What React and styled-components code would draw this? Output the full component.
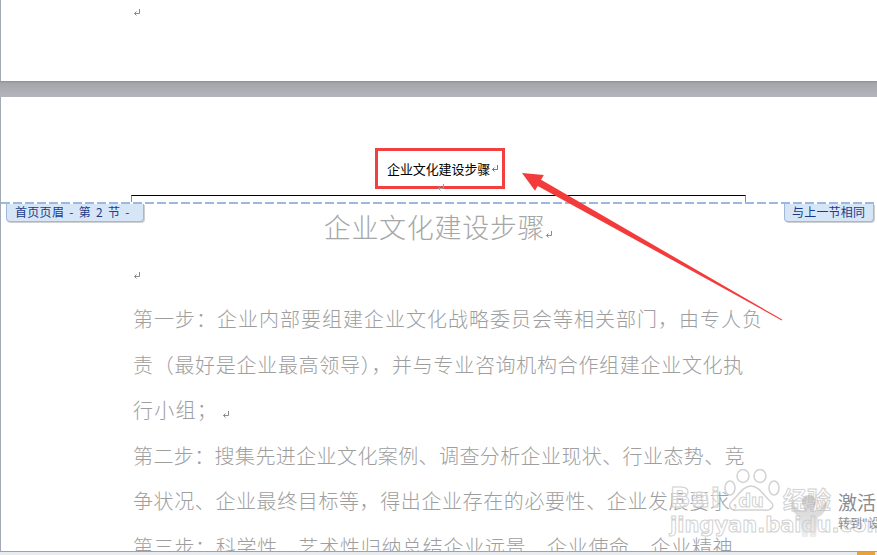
import React from "react";
import styled, { createGlobalStyle } from "styled-components";

const GlobalStyle = createGlobalStyle`
  html, body {
    margin: 0;
    padding: 0;
    background: #fff;
    overflow: hidden;
  }
  #root {
    width: 877px;
    height: 555px;
  }
`;

const Workspace = styled.div`
  position: relative;
  width: 877px;
  height: 555px;
  overflow: hidden;
  display: flex;
  flex-direction: column;
  background: #abaeb3;
  font-family: "Noto Sans CJK SC", sans-serif;
`;

const PrevPage = styled.div`
  flex: none;
  height: 81px;
  background: #fff;
  border-left: 1px solid #a3aab5;
  padding-left: 132px;
  overflow: hidden;
`;

const PageGap = styled.div`
  flex: none;
  height: 16px;
  background: linear-gradient(to bottom, #8c8f94 0, #a2a5aa 2px, #abaeb3 55%, #b2b5ba 100%);
`;

const Page = styled.div`
  position: relative;
  flex: 1;
  min-height: 0;
  background: #fff;
  border-left: 1px solid #a3aab5;
  overflow: hidden;
  display: flex;
  flex-direction: column;
`;

const HeaderArea = styled.div`
  flex: none;
  height: 105px;
  width: 615px;
  margin-left: 130px;
  display: flex;
  flex-direction: column;
  align-items: center;
  justify-content: flex-end;
`;

const HighlightBox = styled.div`
  box-sizing: border-box;
  width: 130px;
  height: 41px;
  margin-left: 3px;
  border: 3px solid #f23f3f;
  padding-left: 9px;
  display: flex;
  align-items: center;
  gap: 1px;
`;

const HeaderText = styled.span`
  font-size: 13px;
  color: #000;
  letter-spacing: -0.1px;
`;

const HeaderMark = styled.div`
  height: 6px;
  margin-left: 5px;
  display: flex;
  align-items: flex-start;
  overflow: visible;

  svg {
    margin-top: -5px;
  }
`;

const HeaderRule = styled.div`
  box-sizing: border-box;
  width: 100%;
  height: 7px;
  border-top: 1px solid #000;
  border-left: 1px solid #8f8f8f;
  border-right: 1px solid #8f8f8f;
`;

const Separator = styled.div`
  position: relative;
  flex: none;
  height: 2px;
  background: repeating-linear-gradient(to right, #9db8de 0 9px, transparent 9px 12px);
`;

const SectionTab = styled.div`
  position: absolute;
  top: 2px;
  ${(p) => (p.$side === "right" ? "right: 3px;" : "left: 5px;")}
  box-sizing: border-box;
  width: ${(p) => p.$width}px;
  height: 18px;
  padding-left: ${(p) => p.$pad}px;
  background: #d7e6f6;
  border: 1px solid #9fb9dd;
  border-top: none;
  border-radius: 0 0 4px 4px;
  box-shadow: 1px 1px 0 #cfcfcf;
  color: #1b3a8a;
  font-size: 12px;
  line-height: 16px;
  white-space: pre;
  overflow: hidden;
  letter-spacing: ${(p) => p.$track || 0}px;
  word-spacing: ${(p) => p.$gap || 0}px;
`;

const Body = styled.div`
  width: 615px;
  margin-left: 130px;
`;

const Title = styled.div`
  height: 46px;
  line-height: 46px;
  text-align: center;
  font-size: 27px;
  font-weight: 300;
  letter-spacing: 0.7px;
  color: #a6a6a6;
  white-space: nowrap;
`;

const BlankLine = styled.div`
  height: 46px;
  padding-left: 2px;
  display: flex;
  align-items: center;
  padding-top: 4px;
  box-sizing: border-box;
`;

const Line = styled.div`
  height: 45.5px;
  line-height: 45.5px;
  padding-left: 2px;
  font-size: 20px;
  font-weight: 300;
  color: #9e9e9e;
  white-space: nowrap;
  letter-spacing: ${(p) => p.$track}px;
`;

const Watermark = styled.div`
  position: absolute;
  left: 669px;
  top: 372px;
  width: 165px;
  display: flex;
  flex-direction: column;
  pointer-events: none;
`;

const MarkRow = styled.div`
  display: flex;
  align-items: flex-end;
`;

const OutlineText = styled.span`
  font-family: ${(p) => (p.$cjk ? '"Noto Sans CJK SC", sans-serif' : '"DejaVu Sans", sans-serif')};
  font-size: ${(p) => p.$size}px;
  font-weight: bold;
  line-height: 1;
  color: rgba(255, 255, 255, 0.55);
  -webkit-text-stroke: 1px #d2d2d2;
  letter-spacing: ${(p) => p.$track || 0}px;
`;

const Activation = styled.div`
  position: absolute;
  left: 837px;
  top: 393px;
  color: #8c8c8c;
  white-space: nowrap;
  display: flex;
  flex-direction: column;
`;

const ActivationTitle = styled.span`
  font-size: 19px;
  line-height: 24px;
`;

const ActivationHint = styled.span`
  font-size: 12px;
  line-height: 16px;
  margin-top: 1px;
`;

const Overlay = styled.svg`
  position: absolute;
  left: 0;
  top: 0;
  pointer-events: none;
`;

const StatusBar = styled.div`
  flex: none;
  height: 4px;
  box-sizing: border-box;
  border-top: 1px solid #9fa3a9;
  background: #e8ebef;
  display: flex;
  justify-content: flex-end;
  padding-right: 2px;
`;

const Indicator = styled.div`
  width: 18px;
  background: #e9a23b;
`;

const ReturnMark = ({ color = "#8a8a8a" }) => (
  <svg width="8" height="7" viewBox="0 0 8 7">
    <path d="M6.5 0 V4.5 H1.5" fill="none" stroke={color} strokeWidth="1" />
    <path d="M3.5 2.5 L1.5 4.5 L3.5 6.5" fill="none" stroke={color} strokeWidth="1" />
  </svg>
);

const PawMark = () => (
  <svg width="62" height="42" viewBox="0 0 62 42">
    <g fill="rgba(255,255,255,0.55)" stroke="#d2d2d2" strokeWidth="1.5">
      <ellipse cx="9" cy="19" rx="5" ry="7" />
      <ellipse cx="22" cy="7" rx="6" ry="6.5" />
      <ellipse cx="39" cy="7" rx="6" ry="6.5" />
      <ellipse cx="53" cy="19" rx="5" ry="7" />
      <path d="M30 17 C22 17 17 27 11 32 C6 37 10 42 16 41 L44 41 C50 42 55 37 49 32 C43 27 38 17 30 17 Z" />
    </g>
    <text x="30" y="38" textAnchor="middle" fontFamily="DejaVu Sans, sans-serif" fontSize="18" fontWeight="bold" fill="rgba(255,255,255,0.6)" stroke="#d2d2d2" strokeWidth="1">du</text>
  </svg>
);

const Mascot = () => (
  <svg width="46" height="52" viewBox="0 0 46 52" style={{ position: "absolute", left: 116, top: 18 }}>
    <defs>
      <linearGradient id="mascotFill" x1="0" y1="0" x2="0" y2="1">
        <stop offset="0" stopColor="#a8a8a8" />
        <stop offset="1" stopColor="#e0e0e0" />
      </linearGradient>
    </defs>
    <path
      d="M6 14 C10 22 14 24 18 24 L18 20 C14 16 16 8 23 8 C30 8 32 16 28 20 L28 24 C32 24 36 22 40 14 C42 20 38 28 32 30 L30 50 L24 50 L23 38 L22 50 L16 50 L14 30 C8 28 4 20 6 14 Z"
      fill="url(#mascotFill)"
      opacity="0.55"
    />
  </svg>
);

const paragraph = [
  { text: "第一步：企业内部要组建企业文化战略委员会等相关部门，由专人负", track: 1.0 },
  { text: "责（最好是企业最高领导），并与专业咨询机构合作组建企业文化执", track: 0.7 },
  { text: "行小组；", track: 1.27, mark: true },
  { text: "第二步：搜集先进企业文化案例、调查分析企业现状、行业态势、竞", track: 0.4 },
  { text: "争状况、企业最终目标等，得出企业存在的必要性、企业发展要求，", track: 0.6 },
  { text: "第三步：科学性、艺术性归纳总结企业远景、企业使命、企业精神、", track: 0.7 },
];

export default function App() {
  return (
    <Workspace>
      <GlobalStyle />
      <PrevPage>
        <div style={{ marginTop: -3 }}>
          <ReturnMark />
        </div>
      </PrevPage>
      <PageGap />
      <Page>
        <HeaderArea>
          <HighlightBox>
            <HeaderText>企业文化建设步骤</HeaderText>
            <ReturnMark color="#777" />
          </HighlightBox>
          <HeaderMark>
            <ReturnMark color="#999" />
          </HeaderMark>
          <HeaderRule />
        </HeaderArea>
        <Separator>
          <SectionTab $width={138} $pad={8} $track={0.3} $gap={2}>首页页眉 - 第 2 节 -</SectionTab>
          <SectionTab $side="right" $width={90} $pad={7} $track={0.2}>与上一节相同</SectionTab>
        </Separator>
        <Body>
          <Title>
            企业文化建设步骤<ReturnMark />
          </Title>
          <BlankLine>
            <ReturnMark />
          </BlankLine>
          {paragraph.map((line) => (
            <Line key={line.text} $track={line.track}>
              {line.text}
              {line.mark && <span style={{ marginLeft: 4 }}><ReturnMark /></span>}
            </Line>
          ))}
        </Body>
        <Watermark>
          <MarkRow>
            <OutlineText $size={27} $track={1}>Bai</OutlineText>
            <PawMark />
            <OutlineText $size={24} $cjk>经验</OutlineText>
          </MarkRow>
          <OutlineText $size={21} style={{ marginTop: 4 }}>jingyan.baidu.com</OutlineText>
          <Mascot />
        </Watermark>
        <Activation>
          <ActivationTitle>激活</ActivationTitle>
          <ActivationHint>转到"设</ActivationHint>
        </Activation>
      </Page>
      <StatusBar>
        <Indicator />
      </StatusBar>
      <Overlay width="877" height="555" viewBox="0 0 877 555">
        <polygon
          points="522,173 543.8,175 541.1,179.8 782.2,319.6 781.8,320.4 537.7,185.9 535,190.7"
          fill="#f43b3b"
        />
      </Overlay>
    </Workspace>
  );
}
